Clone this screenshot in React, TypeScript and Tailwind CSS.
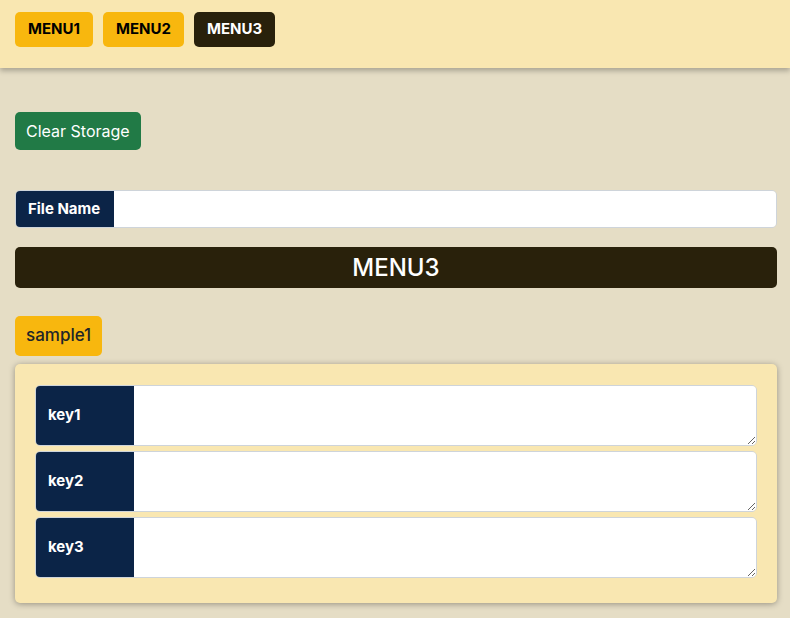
import { useState } from "react";

const menus = ["MENU1", "MENU2", "MENU3"];
const keys = ["key1", "key2", "key3"];

const App = () => {
  const [active, setActive] = useState("MENU3");

  return (
    <div className="min-h-[618px] bg-[#e5ddc5] font-['Inter','Liberation_Sans',sans-serif] text-[#212529]">
      <div className="h-[68px] bg-[#f9e7b1] px-[15px] pt-[12px] flex gap-[10px] items-start shadow-[0_3px_5px_rgba(0,0,0,0.25)] relative">
        {menus.map((m) => (
          <button
            key={m}
            onClick={() => setActive(m)}
            className={
              m === active
                ? "h-[35px] px-[13px] rounded-[5px] bg-[#29210b] text-white text-[15px] font-bold"
                : "h-[35px] px-[13px] rounded-[5px] bg-[#f8b70e] text-black text-[15px] font-bold"
            }
          >
            {m}
          </button>
        ))}
      </div>

      <div className="pl-[15px] pr-[13px] pt-[44px] pb-[15px] flex flex-col">
        <div>
          <button className="h-[38px] px-[11px] rounded-[5px] bg-[#217a46] text-white text-[16px]">
            Clear Storage
          </button>
        </div>

        <div className="mt-[40px] flex h-[38px] rounded-[5px] overflow-hidden border border-[#ced4da]">
          <span className="w-[98px] shrink-0 bg-[#0b2447] text-white text-[15px] font-bold flex items-center pl-[12px]">
            File Name
          </span>
          <input className="flex-1 bg-white outline-none px-3" />
        </div>

        <div className="mt-[19px] h-[41px] rounded-[5px] bg-[#29210b] text-white text-[24px] font-medium flex items-center justify-center">
          {active}
        </div>

        <div className="mt-[28px]">
          <button className="h-[40px] px-[11px] rounded-[5px] bg-[#f8b70e] text-[#212529] text-[17px] font-medium">
            sample1
          </button>
        </div>

        <div className="mt-[8px] bg-[#f9e7b1] rounded-[5px] shadow-[0_1px_6px_rgba(0,0,0,0.35)] pt-[21px] pb-[25px] px-[20px] flex flex-col gap-[5px]">
          {keys.map((k) => (
            <div key={k} className="flex h-[61px] rounded-[5px] overflow-hidden border border-[#ced4da]">
              <span className="w-[98px] shrink-0 bg-[#0b2447] text-white text-[15px] font-bold flex items-center pl-[12px]">
                {k}
              </span>
              <textarea className="flex-1 bg-white outline-none px-3 py-1" />
            </div>
          ))}
        </div>
      </div>
    </div>
  );
};

export default App;
